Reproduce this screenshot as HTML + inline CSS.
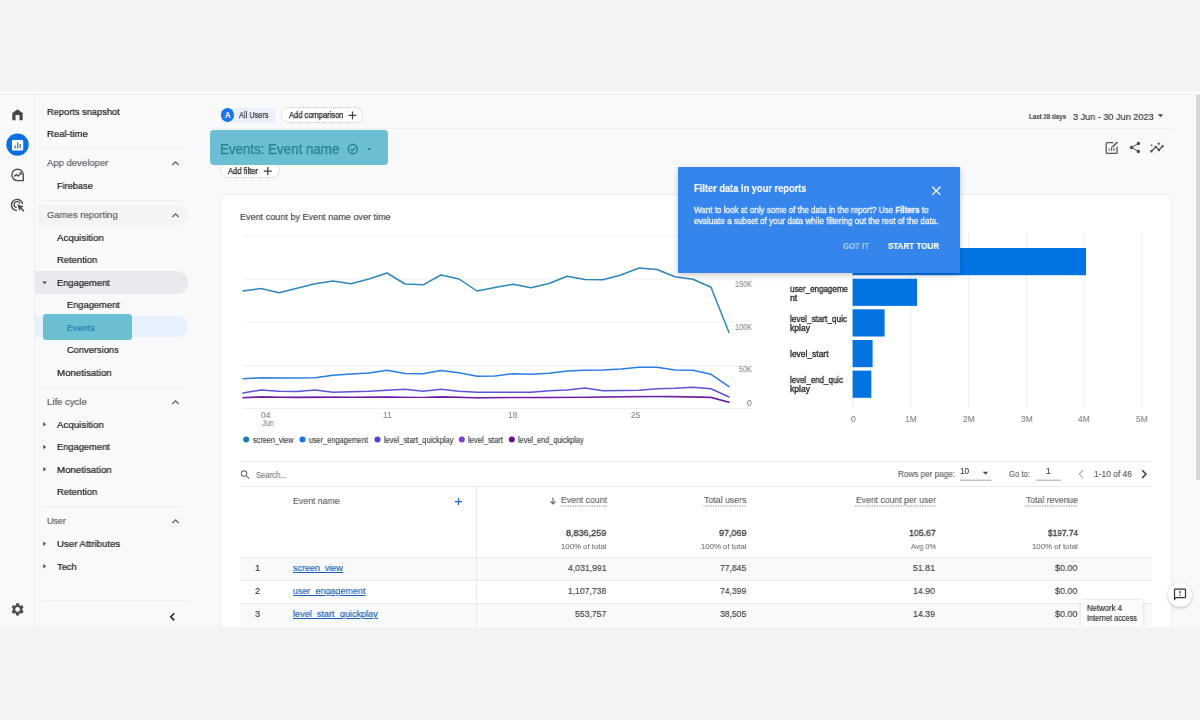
<!DOCTYPE html>
<html lang="en"><head><meta charset="utf-8"><title>Events: Event name</title>
<style>
html,body{margin:0;padding:0}
body{width:1200px;height:720px;position:relative;overflow:hidden;background:#f3f3f3;font-family:"Liberation Sans",sans-serif;}
#app{position:absolute;left:0;top:0;width:1200px;height:720px;overflow:hidden;background:#f8f9fa}
#app>*{position:absolute}
.t{position:absolute;white-space:nowrap;z-index:3;transform-origin:0 50%;will-change:transform;-webkit-text-stroke:0.15px}
.t b{font-weight:700;color:#fff}
svg{position:absolute;left:0;top:0;overflow:visible}
.band{position:absolute;left:0;width:1200px;background:#f3f3f3;z-index:50}
.band.top{top:0;height:95.4px;background:linear-gradient(#f3f3f3 0,#f3f3f3 89.6px,#f7f7f7 90px,#f7f7f7 90.8px,#f2f2f2 91.2px,#f2f2f2 91.8px,#fcfcfc 92.4px,#fdfdfd 93.7px,#ececec 94.2px,#ececec 95px,#f4f5f6 95.4px)}
.band.bot{top:627px;height:93px}
.band.botl{top:625px;height:3px;width:220px;background:linear-gradient(#f8f9fa00,#f5f5f5 60%,#f3f3f3)}
.rail{left:0;top:95px;width:35px;height:532px;background:#f8f9fb;border-right:1.5px solid #eceef1;box-sizing:border-box}
.pill{left:35px;width:153px;height:22px;border-radius:0 11px 11px 0}
.sep{left:42px;width:140px;height:1px;background:#eceef1}
.hl{background:#6cbfd3;border-radius:4px;z-index:5}
.card{left:220.5px;width:950.2px;top:195px;height:440px;background:#fff;border-radius:6px;box-shadow:0 0 0 1px #eceef0}
.chip{box-sizing:border-box;height:15.5px;border-radius:8px;background:#fff;border:1px dotted #c3c6cb}
.tip{left:678px;top:167.3px;width:281.8px;height:105.5px;background:#3585ed;border-radius:1px;box-shadow:0 2px 6px rgba(0,0,0,.22);z-index:10}
.row{left:240px;width:912px;height:23px;background:#f8f9fa}
.hline{left:240px;width:912px;height:1px;background:#e9ebee}
.fab{left:1168px;top:582.6px;width:24px;height:24px;border-radius:50%;background:#fff;box-shadow:0 1px 3px rgba(0,0,0,.25);z-index:10}
.net{left:1081px;top:599.5px;width:62px;height:32px;background:#fbfbfb;box-shadow:0 0 3px rgba(0,0,0,.16);z-index:10}
.sb{left:1196.2px;top:95px;width:4px;height:385px;background:#d6d7da;box-shadow:-1px 0 0 #fbfbfc}

</style></head>
<body>
<div id="app">
<div class="rail"></div>
<div class="sb"></div>
<!-- sidebar pills -->
<div class="pill" style="left:38px;width:150px;top:205.3px;height:20.4px;border-radius:3px 10px 10px 3px;background:#f3f4f6"></div>
<div class="pill" style="top:270.8px;height:23px;border-radius:0 11.5px 11.5px 0;background:#e8eaed"></div>
<div class="pill" style="top:316px;height:21.3px;background:#e7f0fd"></div>
<div class="hl" style="left:43px;top:314.4px;width:89px;height:25.2px;border-radius:3px"></div>
<div class="sep" style="top:148px"></div>
<div class="sep" style="top:200px"></div>
<div class="sep" style="top:386.5px"></div>
<div class="sep" style="top:506.3px"></div>
<div class="sep" style="top:600.3px;width:146px"></div>
<!-- top bar -->
<div style="left:210px;top:128.3px;width:961px;height:1px;background:#eceef0"></div>
<div style="left:221px;top:107.5px;width:54px;height:15px;border-radius:7.5px 3px 3px 7.5px;background:#eaf1fd"></div>
<div style="left:220.8px;top:108.3px;width:13.4px;height:13.4px;border-radius:50%;background:#1a73e8"></div>
<div class="chip" style="left:280.5px;top:107px;width:82px"></div>
<div class="chip" style="left:220.3px;top:162.5px;width:59.4px"></div>
<div class="hl" style="left:210px;top:130.3px;width:177.7px;height:35.2px"></div>
<!-- card -->
<div class="card"></div>
<div class="row" style="top:557px"></div>
<div class="row" style="top:603px"></div>
<div class="hline" style="top:461px"></div>
<div class="hline" style="top:485.9px"></div>
<div class="hline" style="top:556.5px"></div>
<div class="hline" style="top:579.7px"></div>
<div class="hline" style="top:602.7px"></div>
<div style="left:476px;top:487px;width:1px;height:141px;background:#e6e8eb"></div>
<div class="tip"></div>
<div class="fab"></div>
<div class="net"></div>
<svg id="base" width="1200" height="720" viewBox="0 0 1200 720" style="z-index:2">
<!-- line chart grid -->
<g stroke="#f0f2f4" stroke-width="1" fill="none">
<path d="M243 236H752M243 279.2H752M243 322H752M243 365.3H752"/>
<path d="M243 408.5H752" stroke="#eef0f2"/>
</g>
<!-- bar chart grid -->
<g stroke="#eceef0" stroke-width="1" fill="none">
<path d="M853 232.5V408M910.8 232.5V408M968.6 232.5V408M1026.4 232.5V408M1084.2 232.5V408M1142 232.5V408"/>
</g>
<g fill="#0473e2">
<rect x="852.6" y="248" width="233.4" height="27.2"/>
<rect x="852.6" y="278.7" width="64.4" height="27.2"/>
<rect x="852.6" y="309.3" width="32" height="27.2"/>
<rect x="852.6" y="340" width="20" height="27.2"/>
<rect x="852.6" y="370.6" width="18.7" height="27.2"/>
</g>
<!-- series -->
<g fill="none" stroke-linejoin="round" stroke-linecap="round" stroke-width="1.5">
<path stroke="#2f86b8" d="M243 291L261 288.5L279 292.8L297 288.3L315 283.8L333 281L351 283.8L369 279L387 273L405 284L423 284.8L441 275L459 279L477 291L495 287.5L513 284.3L531 287.8L549 283.5L567 276.3L585 279.5L603 279.8L621 275L639 268L657 269.5L675 276.8L693 279.3L711 287.3L729 332.5"/>
<path stroke="#2a7de1" d="M243 378.8L261 377.8L279 378L297 378L315 377.8L333 375.3L351 374L369 373L387 370.3L405 373.5L423 373.7L441 370.4L459 372.8L477 376.3L495 376L513 373.7L531 374.3L549 373.3L567 371L585 370.3L603 370L621 369L639 367.3L657 367.3L675 370L693 370.3L711 374.3L729 386.7"/>
<path stroke="#5a55d6" d="M243 393L261 390L279 391.3L297 391.5L315 390L333 392.3L351 391.8L369 391.3L387 390.3L405 389.3L423 391.3L441 389.3L459 391.3L477 392.3L495 392.3L513 392.3L531 392.3L549 390.7L567 390L585 388L603 390.7L621 390.5L639 390.3L657 388.7L675 388.3L693 387.3L711 388.7L729 397"/>
<path stroke="#8a3fd0" stroke-width="1.2" d="M243 397.4L261 396.6L279 397L315 396.8L351 397.2L387 396.6L423 397.5L441 396.7L477 397.6L531 397.3L585 397L639 396.3L675 396.3L711 397.2L729 402.2"/>
<path stroke="#6a1b9a" stroke-width="1.2" d="M243 398L261 397.2L297 397.7L333 397.3L369 397.5L405 397.5L441 397.2L477 397.9L513 397.7L549 397.7L585 397.5L621 396.9L657 396.7L693 397.2L711 397.7L729 402.3"/>
</g>
<!-- legend dots -->
<circle cx="246.2" cy="439.5" r="3" fill="#1a7bb4"/>
<circle cx="302.5" cy="439.5" r="3" fill="#1a73e8"/>
<circle cx="377.5" cy="439.5" r="3" fill="#4a45d8"/>
<circle cx="461.8" cy="439.5" r="3" fill="#7b3fd3"/>
<circle cx="511.8" cy="439.5" r="3" fill="#6a0d9c"/>
</svg>
<svg id="icons" width="1200" height="720" viewBox="0 0 1200 720" style="z-index:4">
<!-- rail icons -->
<g transform="translate(17.5,114.75) scale(0.65,0.62) translate(-12,-12)" fill="#474a4d"><path d="M4 21V9l8-6 8 6v12h-5v-8.6h-6V21z"/></g>
<circle cx="17.5" cy="144.6" r="11.2" fill="#0870e1"/>
<rect x="12" y="140" width="11.2" height="10.5" rx="1" fill="#fff"/>
<g fill="#3b78c9"><rect x="14.5" y="145.5" width="1.3" height="3"/><rect x="17" y="142.2" width="1.3" height="6.3"/><rect x="19.5" y="144" width="1.3" height="4.5"/></g>
<g fill="none" stroke="#4a4d50" stroke-width="1.4">
<path d="M17.6 169.2a5.7 5.7 0 1 0 0 11.4h5.7v-5.7a5.7 5.7 0 0 0 -5.7 -5.7z" stroke-linejoin="round"/>
<path d="M14.2 176.4l2.2-2 1.8 1.6 2.3-2.4" stroke-width="1.3"/><path d="M19.3 172.6h2.2v2.2z" fill="#4a4d50" stroke-width="0.6"/>
<path d="M22.6 204.2a5.6 5.6 0 1 0 -5.6 6.4"/>
<path d="M19.9 203.6a3 3 0 1 0 -3 3.9" stroke-width="1.2"/>
</g>
<path d="M17.4 204.3l6.6 2.3-2.6 1 3 3-1.1 1.1-3-3-1 2.6z" fill="#4a4d50"/>
<g transform="translate(17.6,609.4) scale(0.64) translate(-12,-12)" fill="#4d5053"><path d="M19.14 12.94c.04-.3.06-.61.06-.94 0-.32-.02-.64-.07-.94l2.03-1.58a.49.49 0 0 0 .12-.61l-1.92-3.32a.488.488 0 0 0-.59-.22l-2.39.96c-.5-.38-1.03-.7-1.62-.94l-.36-2.54a.484.484 0 0 0-.48-.41h-3.84c-.24 0-.43.17-.47.41l-.36 2.54c-.59.24-1.13.57-1.62.94l-2.39-.96c-.22-.08-.47 0-.59.22L2.74 8.87c-.12.21-.08.47.12.61l2.03 1.58c-.05.3-.09.63-.09.94s.02.64.07.94l-2.03 1.58a.49.49 0 0 0-.12.61l1.92 3.32c.12.22.37.29.59.22l2.39-.96c.5.38 1.03.7 1.62.94l.36 2.54c.05.24.24.41.48.41h3.84c.24 0 .44-.17.47-.41l.36-2.54c.59-.24 1.13-.56 1.62-.94l2.39.96c.22.08.47 0 .59-.22l1.92-3.32c.12-.22.07-.47-.12-.61l-2.01-1.58zM12 15.6c-1.98 0-3.6-1.62-3.6-3.6s1.62-3.6 3.6-3.6 3.6 1.62 3.6 3.6-1.62 3.6-3.6 3.6z"/></g>
<!-- sidebar carets -->
<g fill="none" stroke="#5f6368" stroke-width="1.3">
<path d="M172.3 165l3.2-3.2 3.2 3.2"/>
<path d="M172.3 217l3.2-3.2 3.2 3.2"/>
<path d="M172.3 404l3.2-3.2 3.2 3.2"/>
<path d="M172.3 523l3.2-3.2 3.2 3.2"/>
</g>
<path d="M174.3 613.2l-3.6 3.6 3.6 3.6" fill="none" stroke="#202124" stroke-width="1.5"/>
<g fill="#3c4043">
<path d="M42.3 281.5h4.6l-2.3 2.6z"/>
<path d="M43.4 422l2.6 2.3-2.6 2.3z"/>
<path d="M43.4 444.7l2.6 2.3-2.6 2.3z"/>
<path d="M43.4 467l2.6 2.3-2.6 2.3z"/>
<path d="M43.4 541.4l2.6 2.3-2.6 2.3z"/>
<path d="M43.4 564l2.6 2.3-2.6 2.3z"/>
</g>
<!-- chips plus -->
<g fill="none" stroke="#3c4043" stroke-width="1.25">
<path d="M348.6 115.3h7.8M352.5 111.4v7.8"/>
<path d="M263.9 171h7.8M267.8 167.1v7.8"/>
</g>
<!-- date caret -->
<path d="M1157.8 114.3h5.4l-2.7 2.9z" fill="#4a4d50"/>
<!-- top right icons -->
<g fill="none" stroke="#55585c" stroke-width="1.3">
<path d="M1113.5 142.6h-6.3a1 1 0 0 0 -1 1v8.8a1 1 0 0 0 1 1h8.8a1 1 0 0 0 1 -1v-6"/>
<path d="M1112.5 147l5-5" stroke-width="1.6"/>
<path d="M1109.2 150.8v-2.3M1111.6 150.8v-4M1114 150.8v-2.8" stroke-width="1.1"/>
</g>
<g transform="translate(1135,147.5) scale(0.57) translate(-12,-12)" fill="#4a4d50"><path d="M18 16.08c-.76 0-1.44.3-1.96.77L8.91 12.7c.05-.23.09-.46.09-.7s-.04-.47-.09-.7l7.05-4.11c.54.5 1.25.81 2.04.81 1.66 0 3-1.34 3-3s-1.34-3-3-3-3 1.34-3 3c0 .24.04.47.09.7L8.04 9.81C7.5 9.31 6.79 9 6 9c-1.66 0-3 1.34-3 3s1.34 3 3 3c.79 0 1.5-.31 2.04-.81l7.12 4.16c-.05.21-.08.43-.08.65 0 1.61 1.31 2.92 2.92 2.92 1.61 0 2.92-1.31 2.92-2.92s-1.31-2.92-2.92-2.92z"/></g>
<g transform="translate(1157,147.5) scale(0.62) translate(-12,-12)" fill="#4a4d50"><path d="M21 8c-1.45 0-2.26 1.44-1.93 2.51l-3.55 3.56c-.3-.09-.74-.09-1.04 0l-2.55-2.55C12.27 10.45 11.46 9 10 9c-1.45 0-2.27 1.44-1.93 2.52l-4.56 4.55C2.44 15.74 1 16.55 1 18c0 1.1.9 2 2 2 1.45 0 2.26-1.44 1.93-2.51l4.55-4.56c.3.09.74.09 1.04 0l2.55 2.55C12.73 16.55 13.54 18 15 18c1.45 0 2.27-1.44 1.93-2.52l3.56-3.55c1.07.33 2.51-.48 2.51-1.93 0-1.1-.9-2-2-2z"/><path d="M15 9l.94-2.07L18 6l-2.06-.93L15 3l-.92 2.07L12 6l2.08.93z"/><path d="M3.5 11L4 9l2-.5L4 8l-.5-2L3 8l-2 .5L3 9z"/></g>
<!-- search icon -->
<g transform="translate(245.3,474.7) scale(0.5) translate(-12,-12)" fill="#5f6368"><path d="M15.5 14h-.79l-.28-.27A6.471 6.471 0 0 0 16 9.5 6.5 6.5 0 1 0 9.5 16c1.61 0 3.09-.59 4.23-1.57l.27.28v.79l5 4.99L20.49 19l-4.99-5zm-6 0C7.01 14 5 11.99 5 9.5S7.01 5 9.5 5 14 7.01 14 9.5 11.99 14 9.5 14z"/></g>
<!-- table plus -->
<path d="M455 501.6h7M458.5 498.1v7" fill="none" stroke="#1a67c9" stroke-width="1.2"/>
<!-- sort arrow -->
<path d="M553 497.6v6.2M550.5 501.4l2.5 2.5 2.5-2.5" fill="none" stroke="#5f6368" stroke-width="1.1"/>
<!-- dotted underlines -->
<g fill="none" stroke="#7d8286" stroke-width="1" stroke-dasharray="1.2 1.2">
<path d="M560.5 506H607M703.5 506H746.5M855.2 506H935.8M1025.2 506H1077.8"/>
</g>
<!-- pagination -->
<g fill="none" stroke="#a0a4a9" stroke-width="1">
<path d="M960 480.2H991.5M1036 480.2H1061"/>
</g>
<path d="M982.8 471.8h5.4l-2.7 2.9z" fill="#4a4d50"/>
<path d="M1083 470.2l-3.8 3.9 3.8 3.9" fill="none" stroke="#b4b7bb" stroke-width="1.3"/>
<path d="M1142.2 470.2l3.8 3.9-3.8 3.9" fill="none" stroke="#303336" stroke-width="1.4"/>
</svg>
<svg id="icons-hl" width="1200" height="720" viewBox="0 0 1200 720" style="z-index:6">
<g fill="none" stroke="#27808f" stroke-width="1.4">
<circle cx="352.8" cy="149.1" r="4.6"/>
<path d="M350.6 149.2l1.6 1.6 3-3.1"/>
</g>
<path d="M367 148h4.6l-2.3 2.5z" fill="#2a8496"/>
</svg>
<svg id="icons-top" width="1200" height="720" viewBox="0 0 1200 720" style="z-index:12">
<path d="M932.2 186.7l8.2 8.2M940.4 186.7l-8.2 8.2" fill="none" stroke="#fff" stroke-width="1.3"/>
<g transform="translate(1180,594.6) scale(0.61) translate(-12,-12)" fill="#303336"><path d="M20 2H4c-1.1 0-2 .9-2 2v18l4-4h14c1.1 0 2-.9 2-2V4c0-1.1-.9-2-2-2zm0 14H5.17L4 17.17V4h16v12zm-9-4h2v2h-2zm0-6h2v4h-2z"/></g>
</svg>

<!-- text -->
<span class="t" style="left:47.40px;top:105.97px;font-size:9.8px;line-height:12.74px;font-weight:400;color:#202124;transform:scaleX(0.9480);-webkit-text-stroke:0.22px #202124;">Reports snapshot</span>
<span class="t" style="left:47.40px;top:127.97px;font-size:9.8px;line-height:12.74px;font-weight:400;color:#202124;transform:scaleX(0.9732);-webkit-text-stroke:0.22px #202124;">Real-time</span>
<span class="t" style="left:47.40px;top:156.87px;font-size:9.8px;line-height:12.74px;font-weight:400;color:#5f6368;transform:scaleX(0.9701);-webkit-text-stroke:0.22px #5f6368;">App developer</span>
<span class="t" style="left:57.40px;top:179.97px;font-size:9.8px;line-height:12.74px;font-weight:400;color:#202124;transform:scaleX(0.9390);-webkit-text-stroke:0.22px #202124;">Firebase</span>
<span class="t" style="left:47.40px;top:208.77px;font-size:9.8px;line-height:12.74px;font-weight:400;color:#5f6368;transform:scaleX(0.9703);-webkit-text-stroke:0.22px #5f6368;">Games reporting</span>
<span class="t" style="left:57.40px;top:231.97px;font-size:9.8px;line-height:12.74px;font-weight:400;color:#202124;transform:scaleX(0.9875);-webkit-text-stroke:0.22px #202124;">Acquisition</span>
<span class="t" style="left:57.40px;top:254.27px;font-size:9.8px;line-height:12.74px;font-weight:400;color:#202124;transform:scaleX(0.9606);-webkit-text-stroke:0.22px #202124;">Retention</span>
<span class="t" style="left:57.40px;top:276.97px;font-size:9.8px;line-height:12.74px;font-weight:400;color:#202124;transform:scaleX(0.9503);-webkit-text-stroke:0.22px #202124;">Engagement</span>
<span class="t" style="left:67.40px;top:299.27px;font-size:9.8px;line-height:12.74px;font-weight:400;color:#202124;transform:scaleX(0.9503);-webkit-text-stroke:0.22px #202124;">Engagement</span>
<span class="t" style="left:67.40px;top:321.97px;font-size:9.8px;line-height:12.74px;font-weight:400;color:#2a7fae;transform:scaleX(0.9281);z-index:6;-webkit-text-stroke:0.22px #2a7fae;">Events</span>
<span class="t" style="left:67.40px;top:344.27px;font-size:9.8px;line-height:12.74px;font-weight:400;color:#202124;transform:scaleX(0.9513);-webkit-text-stroke:0.22px #202124;">Conversions</span>
<span class="t" style="left:57.40px;top:366.97px;font-size:9.8px;line-height:12.74px;font-weight:400;color:#202124;transform:scaleX(0.9863);-webkit-text-stroke:0.22px #202124;">Monetisation</span>
<span class="t" style="left:47.40px;top:395.87px;font-size:9.8px;line-height:12.74px;font-weight:400;color:#5f6368;transform:scaleX(0.9744);-webkit-text-stroke:0.22px #5f6368;">Life cycle</span>
<span class="t" style="left:57.40px;top:418.57px;font-size:9.8px;line-height:12.74px;font-weight:400;color:#202124;transform:scaleX(0.9875);-webkit-text-stroke:0.22px #202124;">Acquisition</span>
<span class="t" style="left:57.40px;top:441.27px;font-size:9.8px;line-height:12.74px;font-weight:400;color:#202124;transform:scaleX(0.9503);-webkit-text-stroke:0.22px #202124;">Engagement</span>
<span class="t" style="left:57.40px;top:463.57px;font-size:9.8px;line-height:12.74px;font-weight:400;color:#202124;transform:scaleX(0.9863);-webkit-text-stroke:0.22px #202124;">Monetisation</span>
<span class="t" style="left:57.40px;top:485.97px;font-size:9.8px;line-height:12.74px;font-weight:400;color:#202124;transform:scaleX(0.9606);-webkit-text-stroke:0.22px #202124;">Retention</span>
<span class="t" style="left:47.40px;top:514.87px;font-size:9.8px;line-height:12.74px;font-weight:400;color:#5f6368;transform:scaleX(0.9088);-webkit-text-stroke:0.22px #5f6368;">User</span>
<span class="t" style="left:57.40px;top:537.97px;font-size:9.8px;line-height:12.74px;font-weight:400;color:#202124;transform:scaleX(0.9852);-webkit-text-stroke:0.22px #202124;">User Attributes</span>
<span class="t" style="left:57.40px;top:560.57px;font-size:9.8px;line-height:12.74px;font-weight:400;color:#202124;transform:scaleX(0.9564);-webkit-text-stroke:0.22px #202124;">Tech</span>
<span class="t" style="left:224.70px;top:109.00px;font-size:9.6px;line-height:12.48px;font-weight:700;color:#ffffff;transform:scaleX(0.8072);">A</span>
<span class="t" style="left:238.80px;top:110.19px;font-size:8.4px;line-height:10.92px;font-weight:400;color:#3c4043;transform:scaleX(0.8802);-webkit-text-stroke:0.25px #3c4043;">All Users</span>
<span class="t" style="left:289.20px;top:110.19px;font-size:8.4px;line-height:10.92px;font-weight:400;color:#202124;transform:scaleX(0.9004);-webkit-text-stroke:0.25px #202124;">Add comparison</span>
<span class="t" style="left:220.30px;top:138.89px;font-size:15.4px;line-height:20.02px;font-weight:400;color:#27808f;transform:scaleX(0.8662);z-index:6;-webkit-text-stroke:0.25px #27808f;">Events: Event name</span>
<span class="t" style="left:228.30px;top:165.69px;font-size:8.4px;line-height:10.92px;font-weight:400;color:#202124;transform:scaleX(0.9074);-webkit-text-stroke:0.25px #202124;">Add filter</span>
<span class="t" style="left:1029.00px;top:112.47px;font-size:7.2px;line-height:9.36px;font-weight:700;color:#4d5156;transform:scaleX(0.8573);">Last 28 days</span>
<span class="t" style="left:1072.50px;top:110.77px;font-size:9.8px;line-height:12.74px;font-weight:400;color:#3c4043;transform:scaleX(0.9295);-webkit-text-stroke:0.2px #3c4043;">3 Jun - 30 Jun 2023</span>
<span class="t" style="left:240.00px;top:210.52px;font-size:9.8px;line-height:12.74px;font-weight:400;color:#3c4043;transform:scaleX(0.9258);">Event count by Event name over time</span>
<span class="t" style="left:734.50px;top:278.94px;font-size:8.4px;line-height:10.92px;font-weight:400;color:#8a8f95;transform:scaleX(0.8690);">150K</span>
<span class="t" style="left:734.50px;top:321.69px;font-size:8.4px;line-height:10.92px;font-weight:400;color:#8a8f95;transform:scaleX(0.8690);">100K</span>
<span class="t" style="left:738.70px;top:364.19px;font-size:8.4px;line-height:10.92px;font-weight:400;color:#8a8f95;transform:scaleX(0.8587);">50K</span>
<span class="t" style="left:746.86px;top:397.89px;font-size:8.4px;line-height:10.92px;font-weight:400;color:#8a8f95;">0</span>
<span class="t" style="left:260.84px;top:410.19px;font-size:8.4px;line-height:10.92px;font-weight:400;color:#8a8f95;">04</span>
<span class="t" style="left:261.50px;top:418.49px;font-size:8.4px;line-height:10.92px;font-weight:400;color:#8a8f95;transform:scaleX(0.8879);">Jun</span>
<span class="t" style="left:383.15px;top:410.19px;font-size:8.4px;line-height:10.92px;font-weight:400;color:#8a8f95;">11</span>
<span class="t" style="left:508.34px;top:410.19px;font-size:8.4px;line-height:10.92px;font-weight:400;color:#8a8f95;">18</span>
<span class="t" style="left:631.19px;top:410.19px;font-size:8.4px;line-height:10.92px;font-weight:400;color:#8a8f95;">25</span>
<span class="t" style="left:252.50px;top:434.69px;font-size:8.4px;line-height:10.92px;font-weight:400;color:#3c4043;transform:scaleX(0.8698);">screen_view</span>
<span class="t" style="left:309.00px;top:434.69px;font-size:8.4px;line-height:10.92px;font-weight:400;color:#3c4043;transform:scaleX(0.8739);">user_engagement</span>
<span class="t" style="left:383.50px;top:434.69px;font-size:8.4px;line-height:10.92px;font-weight:400;color:#3c4043;transform:scaleX(0.8939);">level_start_quickplay</span>
<span class="t" style="left:468.00px;top:434.69px;font-size:8.4px;line-height:10.92px;font-weight:400;color:#3c4043;transform:scaleX(0.9169);">level_start</span>
<span class="t" style="left:518.30px;top:434.69px;font-size:8.4px;line-height:10.92px;font-weight:400;color:#3c4043;transform:scaleX(0.8709);">level_end_quickplay</span>
<span class="t" style="left:790.00px;top:253.19px;font-size:8.4px;line-height:10.92px;font-weight:400;color:#202124;transform:scaleX(0.9020);-webkit-text-stroke:0.28px #202124;">screen_view</span>
<span class="t" style="left:790.00px;top:283.69px;font-size:8.4px;line-height:10.92px;font-weight:400;color:#202124;transform:scaleX(0.9582);-webkit-text-stroke:0.28px #202124;">user_engageme</span>
<span class="t" style="left:790.00px;top:292.69px;font-size:8.4px;line-height:10.92px;font-weight:400;color:#202124;transform:scaleX(1.0429);-webkit-text-stroke:0.28px #202124;">nt</span>
<span class="t" style="left:790.00px;top:314.19px;font-size:8.4px;line-height:10.92px;font-weight:400;color:#202124;transform:scaleX(0.9793);-webkit-text-stroke:0.28px #202124;">level_start_quic</span>
<span class="t" style="left:790.00px;top:323.19px;font-size:8.4px;line-height:10.92px;font-weight:400;color:#202124;transform:scaleX(1.0224);-webkit-text-stroke:0.28px #202124;">kplay</span>
<span class="t" style="left:790.00px;top:349.19px;font-size:8.4px;line-height:10.92px;font-weight:400;color:#202124;transform:scaleX(1.0086);-webkit-text-stroke:0.28px #202124;">level_start</span>
<span class="t" style="left:790.00px;top:375.19px;font-size:8.4px;line-height:10.92px;font-weight:400;color:#202124;transform:scaleX(0.9483);-webkit-text-stroke:0.28px #202124;">level_end_quic</span>
<span class="t" style="left:790.00px;top:384.19px;font-size:8.4px;line-height:10.92px;font-weight:400;color:#202124;transform:scaleX(1.0224);-webkit-text-stroke:0.28px #202124;">kplay</span>
<span class="t" style="left:850.66px;top:414.49px;font-size:8.4px;line-height:10.92px;font-weight:400;color:#8a8f95;">0</span>
<span class="t" style="left:904.98px;top:414.49px;font-size:8.4px;line-height:10.92px;font-weight:400;color:#8a8f95;">1M</span>
<span class="t" style="left:962.78px;top:414.49px;font-size:8.4px;line-height:10.92px;font-weight:400;color:#8a8f95;">2M</span>
<span class="t" style="left:1020.58px;top:414.49px;font-size:8.4px;line-height:10.92px;font-weight:400;color:#8a8f95;">3M</span>
<span class="t" style="left:1078.38px;top:414.49px;font-size:8.4px;line-height:10.92px;font-weight:400;color:#8a8f95;">4M</span>
<span class="t" style="left:1136.18px;top:414.49px;font-size:8.4px;line-height:10.92px;font-weight:400;color:#8a8f95;">5M</span>
<span class="t" style="left:693.50px;top:181.35px;font-size:11.2px;line-height:14.56px;font-weight:700;color:#ffffff;transform:scaleX(0.8301);z-index:12;">Filter data in your reports</span>
<span class="t" style="left:693.50px;top:204.65px;font-size:8.6px;line-height:11.18px;font-weight:400;color:#f3f7fe;transform:scaleX(0.9379);z-index:12;-webkit-text-stroke:0.3px #f3f7fe;">Want to look at only some of the data in the report? Use <b>Filters</b> to</span>
<span class="t" style="left:693.50px;top:216.05px;font-size:8.6px;line-height:11.18px;font-weight:400;color:#f3f7fe;transform:scaleX(0.9477);z-index:12;-webkit-text-stroke:0.3px #f3f7fe;">evaluate a subset of your data while filtering out the rest of the data.</span>
<span class="t" style="left:842.50px;top:241.30px;font-size:8.6px;line-height:11.18px;font-weight:700;color:#a9c9f6;transform:scaleX(0.9073);z-index:12;">GOT IT</span>
<span class="t" style="left:888.00px;top:241.30px;font-size:8.6px;line-height:11.18px;font-weight:700;color:#ffffff;transform:scaleX(0.9342);z-index:12;">START TOUR</span>
<span class="t" style="left:256.00px;top:469.69px;font-size:8.4px;line-height:10.92px;font-weight:400;color:#777c82;transform:scaleX(0.9096);">Search...</span>
<span class="t" style="left:898.00px;top:469.19px;font-size:8.4px;line-height:10.92px;font-weight:400;color:#5f6368;transform:scaleX(0.9715);">Rows per page:</span>
<span class="t" style="left:959.85px;top:467.12px;font-size:8.2px;line-height:10.66px;font-weight:400;color:#3c4043;">10</span>
<span class="t" style="left:1009.00px;top:469.19px;font-size:8.4px;line-height:10.92px;font-weight:400;color:#5f6368;transform:scaleX(0.9205);">Go to:</span>
<span class="t" style="left:1046.22px;top:467.12px;font-size:8.2px;line-height:10.66px;font-weight:400;color:#3c4043;">1</span>
<span class="t" style="left:1093.50px;top:469.19px;font-size:8.4px;line-height:10.92px;font-weight:400;color:#5f6368;transform:scaleX(1.0075);">1-10 of 46</span>
<span class="t" style="left:293.25px;top:494.83px;font-size:9.4px;line-height:12.22px;font-weight:400;color:#5f6368;transform:scaleX(0.9344);">Event name</span>
<span class="t" style="left:560.75px;top:493.63px;font-size:9.4px;line-height:12.22px;font-weight:400;color:#5f6368;transform:scaleX(0.9290);">Event count</span>
<span class="t" style="left:703.75px;top:493.63px;font-size:9.4px;line-height:12.22px;font-weight:400;color:#5f6368;transform:scaleX(0.9373);">Total users</span>
<span class="t" style="left:855.50px;top:493.63px;font-size:9.4px;line-height:12.22px;font-weight:400;color:#5f6368;transform:scaleX(0.9247);">Event count per user</span>
<span class="t" style="left:1025.50px;top:493.63px;font-size:9.4px;line-height:12.22px;font-weight:400;color:#5f6368;transform:scaleX(0.9237);">Total revenue</span>
<span class="t" style="left:566.25px;top:527.03px;font-size:9.4px;line-height:12.22px;font-weight:400;color:#3c4043;transform:scaleX(0.9648);-webkit-text-stroke:0.35px #3c4043;">8,836,259</span>
<span class="t" style="left:718.75px;top:527.03px;font-size:9.4px;line-height:12.22px;font-weight:400;color:#3c4043;transform:scaleX(0.9586);-webkit-text-stroke:0.35px #3c4043;">97,069</span>
<span class="t" style="left:908.75px;top:527.03px;font-size:9.4px;line-height:12.22px;font-weight:400;color:#3c4043;transform:scaleX(0.9325);-webkit-text-stroke:0.35px #3c4043;">105.67</span>
<span class="t" style="left:1047.50px;top:527.03px;font-size:9.4px;line-height:12.22px;font-weight:400;color:#3c4043;transform:scaleX(0.8852);-webkit-text-stroke:0.35px #3c4043;">$197.74</span>
<span class="t" style="left:560.75px;top:542.39px;font-size:7.7px;line-height:10.01px;font-weight:400;color:#777c82;transform:scaleX(1.0136);">100% of total</span>
<span class="t" style="left:700.75px;top:542.39px;font-size:7.7px;line-height:10.01px;font-weight:400;color:#777c82;transform:scaleX(1.0136);">100% of total</span>
<span class="t" style="left:910.50px;top:542.39px;font-size:7.7px;line-height:10.01px;font-weight:400;color:#777c82;transform:scaleX(0.9484);">Avg 0%</span>
<span class="t" style="left:1031.75px;top:542.39px;font-size:7.7px;line-height:10.01px;font-weight:400;color:#777c82;transform:scaleX(1.0191);">100% of total</span>
<span class="t" style="left:254.89px;top:561.93px;font-size:9.4px;line-height:12.22px;font-weight:400;color:#3c4043;">1</span>
<span class="t" style="left:292.50px;top:561.93px;font-size:9.4px;line-height:12.22px;font-weight:400;color:#1a5fb4;transform:scaleX(0.9595);text-decoration:underline;">screen_view</span>
<span class="t" style="left:567.50px;top:561.93px;font-size:9.4px;line-height:12.22px;font-weight:400;color:#3c4043;transform:scaleX(0.9288);">4,031,991</span>
<span class="t" style="left:720.00px;top:561.93px;font-size:9.4px;line-height:12.22px;font-weight:400;color:#3c4043;transform:scaleX(0.9150);">77,845</span>
<span class="t" style="left:913.25px;top:561.93px;font-size:9.4px;line-height:12.22px;font-weight:400;color:#3c4043;transform:scaleX(0.9374);">51.81</span>
<span class="t" style="left:1055.00px;top:561.93px;font-size:9.4px;line-height:12.22px;font-weight:400;color:#3c4043;transform:scaleX(0.9587);">$0.00</span>
<span class="t" style="left:254.89px;top:585.13px;font-size:9.4px;line-height:12.22px;font-weight:400;color:#3c4043;">2</span>
<span class="t" style="left:292.50px;top:585.13px;font-size:9.4px;line-height:12.22px;font-weight:400;color:#1a5fb4;transform:scaleX(0.9593);text-decoration:underline;">user_engagement</span>
<span class="t" style="left:568.00px;top:585.13px;font-size:9.4px;line-height:12.22px;font-weight:400;color:#3c4043;transform:scaleX(0.9169);">1,107,738</span>
<span class="t" style="left:720.00px;top:585.13px;font-size:9.4px;line-height:12.22px;font-weight:400;color:#3c4043;transform:scaleX(0.9150);">74,399</span>
<span class="t" style="left:913.25px;top:585.13px;font-size:9.4px;line-height:12.22px;font-weight:400;color:#3c4043;transform:scaleX(0.9374);">14.90</span>
<span class="t" style="left:1055.00px;top:585.13px;font-size:9.4px;line-height:12.22px;font-weight:400;color:#3c4043;transform:scaleX(0.9587);">$0.00</span>
<span class="t" style="left:254.89px;top:608.33px;font-size:9.4px;line-height:12.22px;font-weight:400;color:#3c4043;">3</span>
<span class="t" style="left:292.50px;top:608.33px;font-size:9.4px;line-height:12.22px;font-weight:400;color:#1a5fb4;transform:scaleX(0.9767);text-decoration:underline;">level_start_quickplay</span>
<span class="t" style="left:575.00px;top:608.33px;font-size:9.4px;line-height:12.22px;font-weight:400;color:#3c4043;transform:scaleX(0.9221);">553,757</span>
<span class="t" style="left:720.00px;top:608.33px;font-size:9.4px;line-height:12.22px;font-weight:400;color:#3c4043;transform:scaleX(0.9150);">38,505</span>
<span class="t" style="left:913.25px;top:608.33px;font-size:9.4px;line-height:12.22px;font-weight:400;color:#3c4043;transform:scaleX(0.9374);">14.39</span>
<span class="t" style="left:1055.00px;top:608.33px;font-size:9.4px;line-height:12.22px;font-weight:400;color:#3c4043;transform:scaleX(0.9587);">$0.00</span>
<span class="t" style="left:1087.00px;top:603.44px;font-size:8.4px;line-height:10.92px;font-weight:400;color:#2b2b2b;transform:scaleX(0.9283);z-index:12;">Network 4</span>
<span class="t" style="left:1087.00px;top:613.49px;font-size:8.4px;line-height:10.92px;font-weight:400;color:#2b2b2b;transform:scaleX(0.8803);z-index:12;">Internet access</span>
</div>
<div class="band top"></div><div class="band botl"></div><div class="band bot"></div>
</body></html>
